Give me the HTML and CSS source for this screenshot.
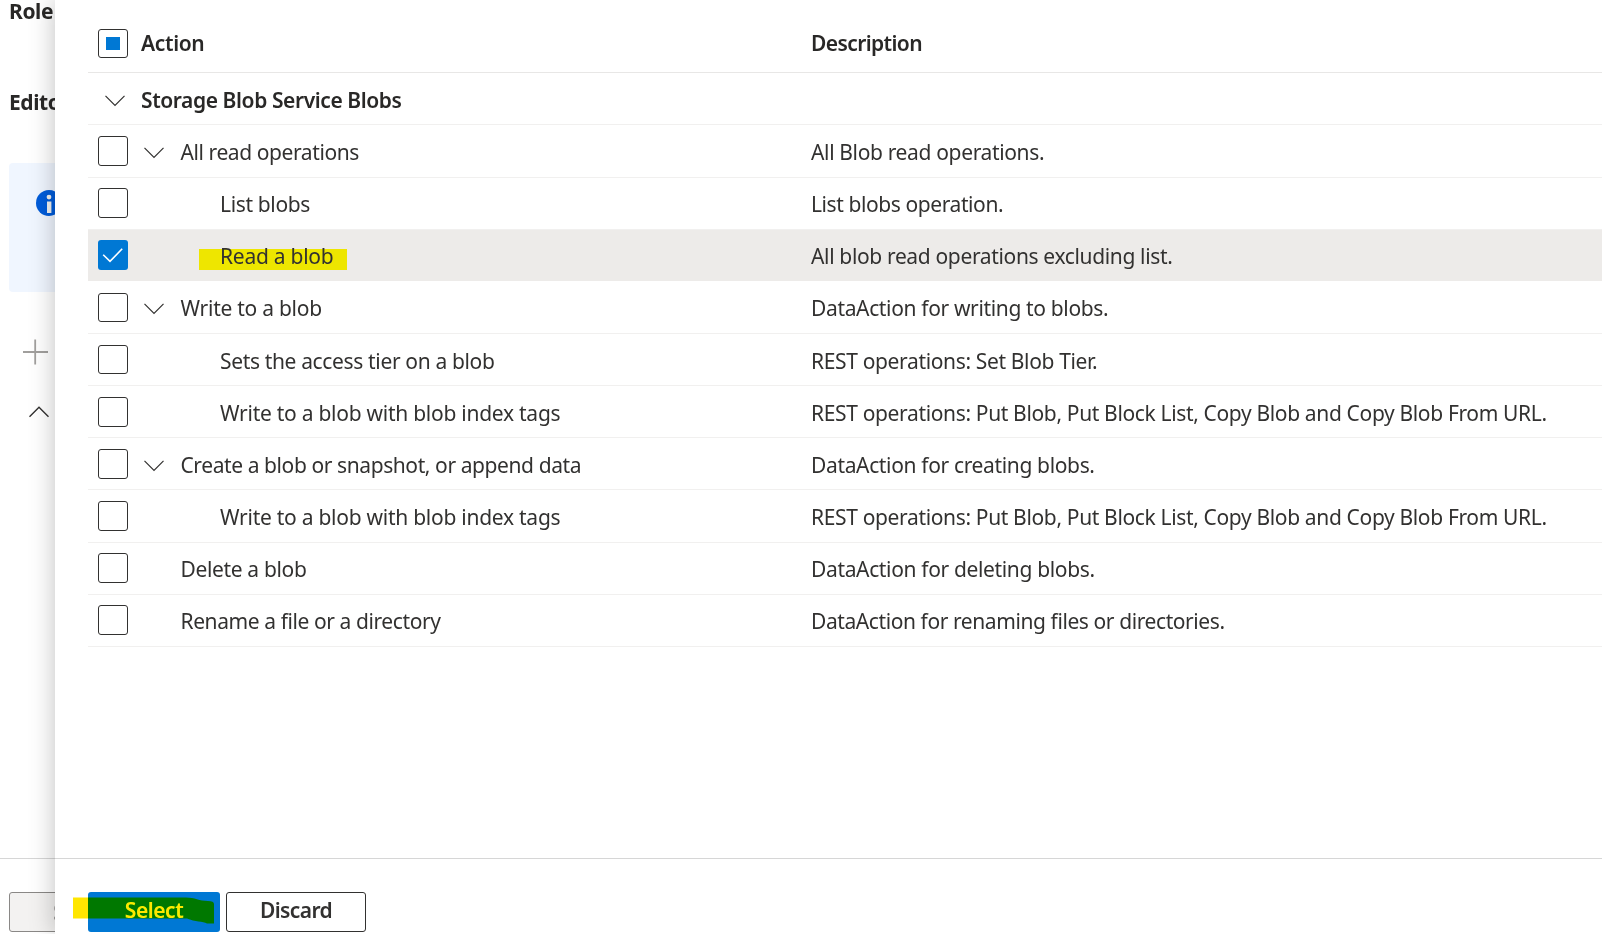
FILE: index.html
```html
<!DOCTYPE html>
<html lang="en">
<head>
<meta charset="utf-8">
<title>Add actions</title>
<link rel="stylesheet" href="styles.css">
</head>
<body>
<main class="page">
  <aside class="backdrop">
    <h2 class="backdrop-title role">Role</h2>
    <h2 class="backdrop-title editor">Editor</h2>
    <div class="info-box">
      <svg class="info-icon" width="26" height="26" viewBox="0 0 26 26"><circle cx="13" cy="13" r="13" fill="#015cda"/><circle cx="13" cy="7.1" r="2.4" fill="#f3f2f1"/><rect x="11" y="11.5" width="4.4" height="11.5" fill="#f3f2f1"/></svg>
    </div>
    <svg class="plus" width="26" height="26" viewBox="0 0 26 26"><path d="M12.2 .5V25.5M0 13H25" stroke="#a19f9d" stroke-width="1.8"/></svg>
    <svg class="chevron-up" width="20" height="12" viewBox="0 0 20 12"><path d="M.5 10.8 10 1.3 19.5 10.8" fill="none" stroke="#323130" stroke-width="1.4"/></svg>
    <footer class="backdrop-footer"><button class="save">Save</button></footer>
  </aside>
  <section class="panel">
    <div class="grid">
      <div class="row head"><span class="box partial"></span><span class="label bold l0">Action</span><span class="desc bold tightest">Description</span></div>
      <div class="row group"><svg class="chev first" viewBox="0 0 20 12"><path d="M.5 .9 10 10.4 19.5 .9"/></svg><span class="label bold l0 tight">Storage Blob Service Blobs</span></div>
      <div class="row tall"><span class="box"></span><svg class="chev" viewBox="0 0 20 12"><path d="M.5 .9 10 10.4 19.5 .9"/></svg><span class="label l1 tight">All read operations</span><span class="desc">All Blob read operations.</span></div>
      <div class="row high"><span class="box"></span><span class="label l2">List blobs</span><span class="desc tight">List blobs operation.</span></div>
      <div class="row high selected"><span class="box checked"><svg viewBox="0 0 30 30"><path d="M5.2 14.8 12 21.4 24.2 8.8"/></svg></span><span class="label l2 loose"><span class="mark">Read a blob</span></span><span class="desc">All blob read operations excluding list.</span></div>
      <div class="row raised"><span class="box short"></span><svg class="chev" viewBox="0 0 20 12"><path d="M.5 .9 10 10.4 19.5 .9"/></svg><span class="label l1 loose">Write to a blob</span><span class="desc">DataAction for writing to blobs.</span></div>
      <div class="row"><span class="box short"></span><span class="label l2">Sets the access tier on a blob</span><span class="desc">REST operations: Set Blob Tier.</span></div>
      <div class="row"><span class="box"></span><span class="label l2 loose">Write to a blob with blob index tags</span><span class="desc">REST operations: Put Blob, Put Block List, Copy Blob and Copy Blob From URL.</span></div>
      <div class="row"><span class="box"></span><svg class="chev" viewBox="0 0 20 12"><path d="M.5 .9 10 10.4 19.5 .9"/></svg><span class="label l1 tight">Create a blob or snapshot, or append data</span><span class="desc">DataAction for creating blobs.</span></div>
      <div class="row tall"><span class="box"></span><span class="label l2 loose">Write to a blob with blob index tags</span><span class="desc">REST operations: Put Blob, Put Block List, Copy Blob and Copy Blob From URL.</span></div>
      <div class="row high"><span class="box"></span><span class="label l1">Delete a blob</span><span class="desc">DataAction for deleting blobs.</span></div>
      <div class="row high"><span class="box"></span><span class="label l1 tight">Rename a file or a directory</span><span class="desc tight">DataAction for renaming files or directories.</span></div>
    </div>
    <footer class="panel-footer">
      <button class="btn primary">Select</button>
      <button class="btn tightest">Discard</button>
      <svg class="marker" width="142" height="28" viewBox="0 0 142 28"><path d="M0 .5H113C122 .5 126 4 135 4Q141 4 141 7V26.5H134C130 24 122 25 114 21.5H0Z" fill="#ffe600"/></svg>
    </footer>
  </section>
</main>
</body>
</html>
```
FILE: styles.css
```css
* { box-sizing: border-box; }
body {
  margin: 0;
  overflow: hidden;
  background: #fff;
  color: #323130;
  font-family: "Noto Sans", "Open Sans", sans-serif;
  font-size: 21px;
}
.page { display: flex; width: 1602px; height: 934px; }
.backdrop {
  display: flex;
  flex-direction: column;
  flex: none;
  width: 55px;
  overflow: hidden;
  padding-left: 9px;
  background: #fff;
}
.backdrop-title { margin: 0; font-size: 21px; line-height: 28px; font-weight: 700; letter-spacing: -0.4px; color: #292827; white-space: nowrap; }
.role { margin-top: -3px; }
.editor { margin-top: 63px; }
.info-box { width: 90px; height: 129px; margin-top: 47px; padding: 27px 0 0 27px; border-radius: 4px; background: #f0f6ff; }
.info-icon, .plus, .chevron-up { display: block; flex: none; }
.plus { margin: 47px 0 0 14px; }
.chevron-up { margin: 41px 0 0 19.5px; }
.backdrop-footer { flex: none; margin: auto 0 0 -9px; width: 120px; height: 76px; border-top: 1px solid #d6d6d6; padding: 33px 0 0 9px; }
.save { display: block; width: 130px; height: 40px; padding: 0 0 0 43px; border: 1px solid #8a8886; border-radius: 3px; background: #f3f2f1; color: #a19f9d; font: 600 21px "Noto Sans", sans-serif; text-align: left; }
.panel {
  position: relative;
  display: flex;
  flex-direction: column;
  flex: 1;
  min-width: 0;
  background: #fff;
  box-shadow: 0 0 24px rgba(0, 0, 0, 0.25);
}
.grid { margin-left: 33px; }
.row {
  display: flex;
  align-items: flex-start;
  height: 52px;
  padding: 11px 0 0 10px;
  border-bottom: 1px solid #f1f0ef;
}
.head { height: 73px; padding-top: 29px; border-color: #e8e7e6; }
.tall { height: 53px; }
.high { padding-top: 10px; }
.selected { background: #edebe9; background-clip: padding-box; border-color: #fff; }
.box { flex: none; width: 30px; height: 30px; border: 1px solid #323130; border-radius: 3px; background: #fff; }
.short, .partial { height: 29px; }
.partial { display: grid; place-items: center; }
.partial::before { content: ""; width: 14px; height: 13px; background: #0078d4; }
.checked { border: 0; background: #0078d4; }
.checked svg { display: block; }
.checked path { fill: none; stroke: #fff; stroke-width: 1.6; }
.chev { flex: none; width: 20px; height: 12px; margin: 11px -36px 0 16px; }
.chev path { fill: none; stroke: #323130; stroke-width: 1.2; }
.chev.first { margin: 11px 3px 0 7px; }
.raised .chev { margin-top: 10px; }
.label, .desc { padding-top: 1px; line-height: 30px; letter-spacing: -0.35px; white-space: nowrap; }
.label { flex: none; width: 683px; }
.head .label, .head .desc { margin-top: -1px; padding-top: 0; }
.raised .label, .raised .desc { padding-top: 0; }
.bold { font-weight: 600; color: #292827; }
.l0 { padding-left: 13px; }
.l1 { padding-left: 52.5px; }
.l2 { padding-left: 92px; }
.loose { letter-spacing: -0.26px; }
.tight { letter-spacing: -0.41px; }
.tightest { letter-spacing: -0.6px; }
.mark { position: relative; z-index: 0; }
.mark::before { content: ""; position: absolute; z-index: -1; left: -21px; top: 7px; width: 148px; height: 21px; background: #eee600; }
.panel-footer { position: relative; display: flex; gap: 6px; height: 76px; margin-top: auto; padding: 33px 0 0 33px; border-top: 1px solid #d6d6d6; }
.btn { width: 140px; height: 40px; padding: 0 0 5px; border: 1px solid #323130; border-radius: 3px; background: #fff; color: #323130; font: 600 21px "Noto Sans", sans-serif; }
.primary { width: 132px; border: 0; background: #0078d4; color: #fff; letter-spacing: -0.45px; }
.marker { position: absolute; left: 17.7px; top: 38px; mix-blend-mode: darken; }
```
